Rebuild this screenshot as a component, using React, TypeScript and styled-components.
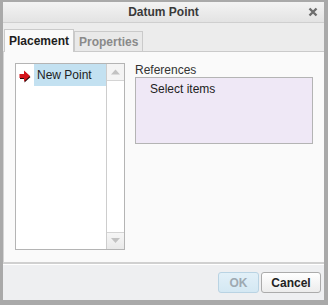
import React from 'react';
import styled, { createGlobalStyle } from 'styled-components';

const GlobalStyle = createGlobalStyle`
  html, body {
    margin: 0;
    padding: 0;
    background: #ffffff;
  }
  * {
    box-sizing: border-box;
  }
`;

const Window = styled.div`
  width: 328px;
  height: 305px;
  display: flex;
  flex-direction: column;
  border-style: solid;
  border-color: #a9a9a9;
  border-width: 2px 4px 5px 3px;
  background: #ececec;
  font-family: 'Liberation Sans', Arial, sans-serif;
  font-size: 12px;
  color: #333;
`;

const TitleBar = styled.div`
  height: 21px;
  flex: none;
  display: flex;
  align-items: center;
  justify-content: center;
  position: relative;
  background: linear-gradient(#f3f3f3, #e3e3e3);
  border-bottom: 1px solid #cfcfcf;
`;

const Title = styled.span`
  font-weight: bold;
  color: #3a3a3a;
`;

// close cross sits over the title bar corner
const CloseButton = styled.span`
  position: absolute;
  right: 6px;
  top: 5px;
  width: 10px;
  height: 10px;
  display: flex;
`;

const TabStrip = styled.div`
  height: 28px;
  flex: none;
  display: flex;
  align-items: flex-end;
  padding-left: 1px;
`;

const Tab = styled.div<{ active?: boolean }>`
  height: ${({ active }) => (active ? '23px' : '20px')};
  padding: 0 4px;
  display: flex;
  align-items: center;
  font-weight: bold;
  color: ${({ active }) => (active ? '#1e1e1e' : '#8a8a8a')};
  background: ${({ active }) => (active ? '#fafafa' : '#e9e9e9')};
  border: 1px solid #cacaca;
  border-bottom: none;
  margin-bottom: ${({ active }) => (active ? '-1px' : '0')};
  position: relative;
  z-index: ${({ active }) => (active ? 2 : 1)};
`;

const Panel = styled.div`
  flex: 1;
  display: flex;
  gap: 10px;
  padding: 11px 0 0 11px;
  background: #fafafa;
  border-top: 1px solid #cacaca;
  border-left: 1px solid #d4d4d4;
  border-bottom: 2px solid #d0d0d0;
`;

const ListBox = styled.div`
  width: 110px;
  height: 187px;
  flex: none;
  display: flex;
  background: #ffffff;
  border: 1px solid #b4b4b4;
`;

const ListItems = styled.div`
  flex: 1;
  display: flex;
  flex-direction: column;
`;

const ListRow = styled.div`
  height: 22px;
  display: flex;
  align-items: center;
`;

const RowIcon = styled.span`
  width: 18px;
  height: 22px;
  flex: none;
  display: flex;
  align-items: center;
  justify-content: center;
  padding-top: 2px;
`;

const RowLabel = styled.span<{ selected?: boolean }>`
  flex: 1;
  height: 22px;
  display: flex;
  align-items: center;
  padding-left: 3px;
  color: #222;
  background: ${({ selected }) => (selected ? '#c3e1f1' : 'transparent')};
`;

const ScrollBar = styled.div`
  width: 18px;
  flex: none;
  display: flex;
  flex-direction: column;
  justify-content: space-between;
  border-left: 1px solid #cdcdcd;
  background: #ffffff;
`;

const ScrollButton = styled.div<{ down?: boolean }>`
  height: 17px;
  display: flex;
  align-items: center;
  justify-content: center;
  background: ${({ down }) => (down ? 'linear-gradient(#f6f6f6, #e9e9e9)' : '#f4f4f4')};
  border-bottom: ${({ down }) => (down ? 'none' : '1px solid #d4d4d4')};
  border-top: ${({ down }) => (down ? '1px solid #d4d4d4' : 'none')};
`;

const RefColumn = styled.div`
  display: flex;
  flex-direction: column;
  padding-top: 1px;
`;

const RefLabel = styled.div`
  height: 13px;
  line-height: 13px;
  color: #333;
`;

const RefBox = styled.div`
  width: 178px;
  height: 67px;
  background: #efe8f6;
  border: 1px solid #b4b4b4;
  padding: 4px 0 0 14px;
  color: #222;
`;

const Footer = styled.div`
  height: 36px;
  flex: none;
  display: flex;
  justify-content: flex-end;
  align-items: flex-start;
  gap: 2px;
  padding: 7px 3px 0 0;
  background: #eeeff1;
  border-top: 1px solid #ffffff;
`;

const Button = styled.button<{ $primary?: boolean; $width: number }>`
  width: ${({ $width }) => $width}px;
  height: 21px;
  padding: 0;
  border-radius: 3px;
  font-family: 'Liberation Sans', Arial, sans-serif;
  font-size: 12px;
  font-weight: bold;
  border: 1px solid ${({ $primary }) => ($primary ? '#b9d3e3' : '#ababab')};
  color: ${({ $primary }) => ($primary ? '#9ea9b1' : '#222')};
  background: ${({ $primary }) =>
    $primary ? 'linear-gradient(#e2f0f8, #d4e8f3)' : 'linear-gradient(#ffffff, #ececec)'};
`;

const RedArrow = () => (
  <svg width="12" height="13" viewBox="0 0 12 13">
    <path d="M0.5 4 H5 V0.5 L11 6 L5 11.5 V8 H0.5 Z" fill="#2a0606" transform="translate(0.5 1)" />
    <path d="M0.5 4 H5 V0.5 L11 6 L5 11.5 V8 H0.5 Z" fill="#d4141a" />
  </svg>
);

const Triangle = ({ down }: { down?: boolean }) => (
  <svg width="9" height="6" viewBox="0 0 9 6">
    <path d={down ? 'M0 0 H9 L4.5 5 Z' : 'M0 5.5 H9 L4.5 0.5 Z'} fill="#c2c2c2" />
  </svg>
);

const App = () => {
  return (
    <>
      <GlobalStyle />
      <Window>
        <TitleBar>
          <Title>Datum Point</Title>
          <CloseButton>
            <svg width="10" height="10" viewBox="0 0 10 10">
              <path d="M1.5 1.5 L8.5 8.5 M8.5 1.5 L1.5 8.5" stroke="#6e6e6e" strokeWidth="2.4" />
            </svg>
          </CloseButton>
        </TitleBar>
        <TabStrip>
          <Tab active>Placement</Tab>
          <Tab>Properties</Tab>
        </TabStrip>
        <Panel>
          <ListBox>
            <ListItems>
              <ListRow>
                <RowIcon>
                  <RedArrow />
                </RowIcon>
                <RowLabel selected>New Point</RowLabel>
              </ListRow>
            </ListItems>
            <ScrollBar>
              <ScrollButton>
                <Triangle />
              </ScrollButton>
              <ScrollButton down>
                <Triangle down />
              </ScrollButton>
            </ScrollBar>
          </ListBox>
          <RefColumn>
            <RefLabel>References</RefLabel>
            <RefBox>Select items</RefBox>
          </RefColumn>
        </Panel>
        <Footer>
          <Button $primary $width={41} disabled>
            OK
          </Button>
          <Button $width={60}>Cancel</Button>
        </Footer>
      </Window>
    </>
  );
};

export default App;
